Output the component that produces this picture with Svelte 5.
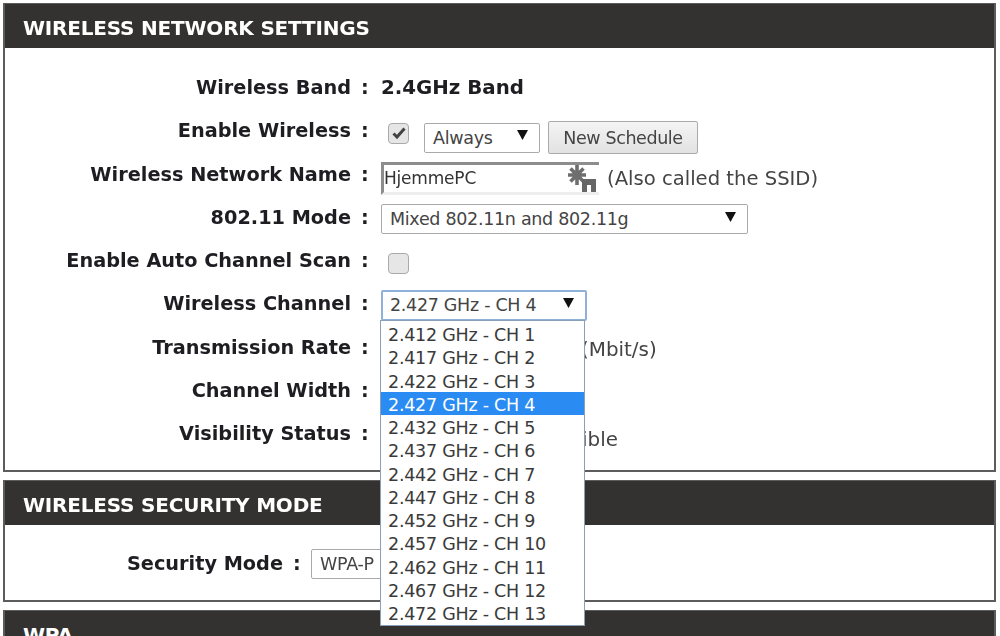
<script>
	const rows = [
		{ label: 'Wireless Band', kind: 'band' },
		{ label: 'Enable Wireless', kind: 'enable' },
		{ label: 'Wireless Network Name', kind: 'name' },
		{ label: '802.11 Mode', kind: 'mode' },
		{ label: 'Enable Auto Channel Scan', kind: 'auto' },
		{ label: 'Wireless Channel', kind: 'channel' },
		{ label: 'Transmission Rate', kind: 'rate' },
		{ label: 'Channel Width', kind: 'none' },
		{ label: 'Visibility Status', kind: 'visible' }
	];

	const freqs = [412, 417, 422, 427, 432, 437, 442, 447, 452, 457, 462, 467, 472];
	const channels = freqs.map((f, i) => ({ text: `2.${f} GHz - CH ${i + 1}`, selected: i === 3 }));
</script>

{#snippet arrow()}
	<svg class="arrow" width="11" height="10" viewBox="0 0 11 10"><path d="M0 0h11L5.5 10z" /></svg>
{/snippet}

<div class="page">
	<section class="panel first">
		<h2>WIRELESS NETWORK SETTINGS</h2>
		<div class="form">
			{#each rows as row}
				<div class="row">
					<span class="label">{row.label}</span>
					<span class="colon">:</span>
					<div class="value">
						{#if row.kind === 'band'}
							<strong>2.4GHz Band</strong>
						{:else if row.kind === 'enable'}
							<div class="controls">
								<span class="check">
									<svg width="14" height="12" viewBox="0 0 14 12"><path d="M1.5 6.5 5 10l7.5-8.5" fill="none" stroke="#444" stroke-width="3" /></svg>
								</span>
								<span class="select always">Always {@render arrow()}</span>
								<span class="button">New Schedule</span>
							</div>
						{:else if row.kind === 'name'}
							<span class="input">
								HjemmePC
								<svg class="key" width="30" height="27" viewBox="0 0 30 27">
									<path d="M10 0v20M1 10h18M3.5 3.5l13 13M16.5 3.5l-13 13" fill="none" stroke="#6e6e6e" stroke-width="3.6" />
									<path d="M15 14h14v13h-5v-7h-4v7h-5z" fill="#666" />
								</svg>
							</span>
							<span class="hint">(Also called the SSID)</span>
						{:else if row.kind === 'mode'}
							<span class="select mode">Mixed 802.11n and 802.11g {@render arrow()}</span>
						{:else if row.kind === 'auto'}
							<span class="check lower"></span>
						{:else if row.kind === 'channel'}
							<span class="select channel">2.427 GHz - CH 4 {@render arrow()}</span>
						{:else if row.kind === 'rate'}
							<span class="behind rate">(Mbit/s)</span>
						{:else if row.kind === 'visible'}
							<span class="behind visible">ible</span>
						{/if}
					</div>
				</div>
			{/each}
		</div>

		<ul class="dropdown">
			{#each channels as ch}
				<li class:selected={ch.selected}>{ch.text}</li>
			{/each}
		</ul>
	</section>

	<section class="panel second">
		<h2>WIRELESS SECURITY MODE</h2>
		<div class="row security">
			<span class="label">Security Mode</span>
			<span class="colon">:</span>
			<span class="select wpa">WPA-P</span>
		</div>
	</section>

	<section class="panel third">
		<h2>WPA</h2>
	</section>
</div>

<style>
	:global(body) {
		margin: 0;
		background: #fff;
	}

	.page {
		width: 1000px;
		height: 636px;
		overflow: hidden;
		padding: 3px 0 0 3px;
		box-sizing: border-box;
		font-family: "DejaVu Sans", Tahoma, sans-serif;
		color: #222;
		display: flex;
		flex-direction: column;
		gap: 8px;
		filter: blur(0.45px);
	}

	.panel {
		position: relative;
		width: 993px;
		box-sizing: border-box;
		border: 2px solid #5c5c5c;
		border-top-width: 1px;
		flex: none;
	}

	.first { height: 469px; }
	.second { height: 122px; }
	.third { height: 60px; border-bottom: 0; }

	h2 {
		margin: 0;
		height: 44px;
		padding-left: 18px;
		background: #333230;
		color: #fff;
		font-family: "DejaVu Sans", sans-serif;
		font-size: 20px;
		font-weight: 700;
		line-height: 48px;
		letter-spacing: -0.2px;
	}

	.form {
		padding-top: 18px;
	}

	.row {
		display: grid;
		grid-template-columns: 346px 30px 1fr;
		grid-template-rows: 43.25px;
		align-items: center;
		height: 43.25px;
	}

	.label, .colon, strong {
		font-size: 19.3px;
		font-weight: 700;
		color: #1d1d22;
	}

	.label {
		text-align: right;
		white-space: nowrap;
	}

	.colon {
		padding-left: 10px;
	}

	strong {
		font-size: 19.8px;
	}

	.value {
		display: flex;
		align-items: center;
		font-size: 18px;
		color: #444;
		position: relative;
		height: 100%;
	}

	.controls {
		display: flex;
		align-items: center;
		margin-top: 14px;
	}

	.check {
		box-sizing: border-box;
		width: 21px;
		height: 21px;
		margin-left: 7px;
		border: 1px solid #aaa;
		border-radius: 4px;
		background: #e6e6e6;
		display: flex;
		align-items: center;
		justify-content: center;
	}

	.controls .check {
		margin-top: -9px;
	}

	.check.lower {
		margin-top: 5px;
	}

	.select {
		box-sizing: border-box;
		height: 30px;
		display: flex;
		align-items: center;
		justify-content: space-between;
		padding: 0 11px 0 8px;
		border: 1px solid #aaa;
		border-radius: 2px;
		background: #fff;
		font-size: 17.5px;
		letter-spacing: -0.3px;
		color: #444;
		white-space: nowrap;
	}

	.arrow {
		margin-bottom: 5px;
		flex: none;
	}

	.arrow path {
		fill: #111;
	}

	.always {
		width: 116px;
		margin-left: 15px;
	}

	.button {
		box-sizing: border-box;
		width: 150px;
		height: 33px;
		margin-left: 8px;
		border: 1px solid #aaa;
		border-radius: 2px;
		background: linear-gradient(#f4f4f4, #e2e2e2);
		font-size: 17.5px;
		letter-spacing: -0.4px;
		color: #444;
		display: flex;
		align-items: center;
		justify-content: center;
	}

	.input {
		box-sizing: border-box;
		width: 218px;
		height: 33px;
		margin-top: 8px;
		padding-left: 0;
		border: 3px solid #eee;
		border-top-color: #8d8d8d;
		border-left-color: #8d8d8d;
		border-right: 0;
		font-size: 17px;
		letter-spacing: -0.2px;
		color: #333;
		display: flex;
		align-items: center;
		justify-content: space-between;
	}

	.key {
		margin-right: 2px;
	}

	.hint {
		margin-left: 8px;
		margin-top: 9px;
		font-size: 19.6px;
		color: #444;
	}

	.mode {
		width: 367px;
		margin-top: 4px;
	}

	.channel {
		width: 206px;
		height: 31px;
		margin-top: 3px;
		border: 2px solid #8fb0d8;
		padding-left: 7px;
	}

	.behind {
		position: absolute;
		font-size: 19.9px;
		color: #444;
		white-space: nowrap;
	}

	.rate {
		left: 200px;
		top: 12px;
	}

	.visible {
		left: 201px;
		top: 16px;
	}

	.dropdown {
		position: absolute;
		left: 375px;
		top: 316px;
		width: 205px;
		height: 306px;
		box-sizing: border-box;
		margin: 0;
		padding: 1px 0 0;
		list-style: none;
		background: #fff;
		border: 1px solid #8a9fb8;
		z-index: 2;
	}

	.dropdown li {
		height: 23.25px;
		line-height: 27px;
		padding-left: 7px;
		font-size: 17.5px;
		letter-spacing: -0.25px;
		color: #3a3a3a;
		white-space: nowrap;
	}

	.dropdown li.selected {
		background: #2a8bf2;
		color: #fff;
	}

	.security {
		height: 77px;
		grid-template-rows: 77px;
		grid-template-columns: 278px 28px 1fr;
	}

	.wpa {
		width: 200px;
		height: 30px;
		padding-left: 8px;
	}
</style>
